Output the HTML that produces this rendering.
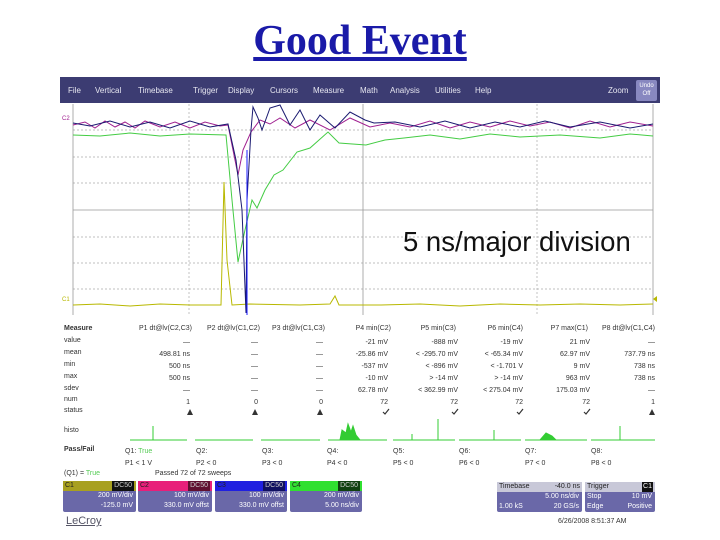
<!DOCTYPE html>
<html><head><style>
body{margin:0;width:720px;height:540px;background:#fff;position:relative;overflow:hidden;font-family:"Liberation Sans",sans-serif}
.t{position:absolute;font-size:7px;color:#333;white-space:nowrap;line-height:8px}
.r{text-align:right}
.title{position:absolute;left:0;width:720px;top:17px;text-align:center;font-family:"Liberation Serif",serif;font-weight:bold;font-size:42px;color:#1a1aa8;text-decoration:underline}
.menu{position:absolute;left:60px;top:77px;width:600px;height:26px;background:#3c3c72}
.menu span{position:absolute;top:9px;font-size:8px;color:#e6e6f0}
.box{position:absolute;background:#6a68a8;color:#fff;font-size:7px;border-radius:2px}
.box .h{height:10px;line-height:10px;padding:0 2px;color:#222}
.box .v{text-align:right;padding-right:3px;line-height:10px}
</style></head><body>
<div class="title">Good Event</div>
<div class="menu">
<span style="left:8px">File</span><span style="left:35px">Vertical</span><span style="left:78px">Timebase</span><span style="left:133px">Trigger</span><span style="left:168px">Display</span><span style="left:210px">Cursors</span><span style="left:253px">Measure</span><span style="left:300px">Math</span><span style="left:330px">Analysis</span><span style="left:375px">Utilities</span><span style="left:415px">Help</span><span style="left:548px">Zoom</span>
<div style="position:absolute;left:576px;top:3px;width:21px;height:21px;background:#8888c0;border-radius:2px;font-size:6px;color:#fff;text-align:center;line-height:8px;padding-top:2px;box-sizing:border-box">Undo<br>Off</div>
</div>
<svg style="position:absolute;left:0;top:0" width="720" height="540">
<g stroke="#aaa" stroke-width="0.7" stroke-dasharray="2,2">
<line x1="73" y1="130" x2="653" y2="130"/><line x1="73" y1="157" x2="653" y2="157"/><line x1="73" y1="183" x2="653" y2="183"/><line x1="73" y1="237" x2="653" y2="237"/><line x1="73" y1="263" x2="653" y2="263"/><line x1="73" y1="289" x2="653" y2="289"/>
<line x1="189" y1="104" x2="189" y2="315"/><line x1="537" y1="104" x2="537" y2="315"/>
</g>
<g stroke="#999" stroke-width="0.8"><line x1="73" y1="104" x2="73" y2="315"/><line x1="653" y1="104" x2="653" y2="315"/><line x1="363" y1="104" x2="363" y2="315"/><line x1="73" y1="210" x2="653" y2="210"/></g>
<polyline fill="none" stroke="#b8b800" stroke-width="1" points="73,305 100,304 130,306 160,304 190,305 221,305 224,182 227,260 232,305 250,304 300,305 330,304 335,296 339,305 380,305 420,304 460,306 500,304 540,305 580,304 620,305 653,304"/>
<polyline fill="none" stroke="#44cc44" stroke-width="1" points="73,135 100,136 130,133 160,136 190,134 226,135 232,200 238,262 245,230 252,200 257,208 265,190 274,175 283,170 297,152 310,148 328,132 339,143 366,145 385,140 404,138 430,135 460,139 490,134 520,137 560,135 600,138 630,134 653,136"/>
<polyline fill="none" stroke="#a02090" stroke-width="1" points="73,125 85,122 95,128 105,121 115,127 125,122 135,128 145,121 160,127 175,122 190,128 205,122 220,126 228,125 233,150 238,175 243,150 251,132 260,120 270,124 280,118 295,128 310,120 330,130 350,118 370,127 390,123 410,127 430,121 450,128 470,122 490,127 510,121 530,126 550,122 570,128 590,121 610,127 630,122 653,126"/>
<polyline fill="none" stroke="#1a1a70" stroke-width="1" points="73,123 90,126 110,121 130,127 150,122 170,128 190,121 210,127 228,124 236,160 242,210 246,313 247,200 251,130 253,107 258,118 262,130 270,108 280,105 290,125 300,110 310,130 320,115 335,128 350,112 365,120 374,123 395,122 420,127 445,121 470,128 495,122 520,127 545,121 570,127 600,122 630,128 653,124"/>
<line x1="247" y1="150" x2="247" y2="315" stroke="#1a1aff" stroke-width="1"/>
<polygon points="657,296 653,299 657,302" fill="#b8b800"/>
<g fill="#333"><polygon points="187,415 190,409 193,415"/><polygon points="252,415 255,409 258,415"/><polygon points="317,415 320,409 323,415"/><polygon points="649,415 652,409 655,415"/></g>
<g stroke="#333" stroke-width="1.2" fill="none"><polyline points="383,412 385,414 389,409"/><polyline points="452,412 454,414 458,409"/><polyline points="517,412 519,414 523,409"/><polyline points="584,412 586,414 590,409"/></g>
<g stroke="#33cc33" stroke-width="1" fill="#33cc33">
<line x1="130" y1="440" x2="187" y2="440"/><line x1="153" y1="440" x2="153" y2="426"/>
<line x1="195" y1="440" x2="253" y2="440"/><line x1="261" y1="440" x2="320" y2="440"/>
<polygon points="340,440 342,430 346,433 348,424 351,432 353,426 356,435 360,440"/><line x1="328" y1="440" x2="387" y2="440"/>
<line x1="393" y1="440" x2="455" y2="440"/><line x1="438" y1="440" x2="438" y2="419"/><line x1="412" y1="440" x2="412" y2="434"/>
<line x1="459" y1="440" x2="521" y2="440"/><line x1="494" y1="440" x2="494" y2="430"/>
<line x1="525" y1="440" x2="587" y2="440"/><polygon points="540,440 546,433 552,436 556,440"/>
<line x1="591" y1="440" x2="655" y2="440"/><line x1="620" y1="440" x2="620" y2="426"/>
</g>
</svg>
<div class="t" style="left:62px;top:115px;color:#a02090;font-size:6px">C2</div>
<div class="t" style="left:62px;top:296px;color:#b8b800;font-size:6px">C1</div>
<div class="t" style="left:403px;top:227px;font-size:27.5px;line-height:29px;color:#111">5 ns/major division</div>
<div class="t" style="left:64px;top:325px;font-weight:bold">Measure</div>
<div class="t" style="left:64px;top:337px">value</div><div class="t" style="left:64px;top:349px">mean</div><div class="t" style="left:64px;top:361px">min</div><div class="t" style="left:64px;top:373px">max</div><div class="t" style="left:64px;top:385px">sdev</div><div class="t" style="left:64px;top:396px">num</div><div class="t" style="left:64px;top:407px">status</div><div class="t" style="left:64px;top:427px">histo</div>
<div class="t" style="left:64px;top:446px;font-weight:bold">Pass/Fail</div>
<div class="t" style="left:64px;top:470px">(Q1) = <span style="color:#5c5">True</span></div>
<div class="t" style="left:155px;top:470px">Passed 72 of 72 sweeps</div>
<div class="t r" style="left:100px;width:92px;top:325px">P1 dt@lv(C2,C3)</div>
<div class="t r" style="left:170px;width:90px;top:325px">P2 dt@lv(C1,C2)</div>
<div class="t r" style="left:230px;width:95px;top:325px">P3 dt@lv(C1,C3)</div>
<div class="t r" style="left:330px;width:61px;top:325px">P4 min(C2)</div>
<div class="t r" style="left:395px;width:61px;top:325px">P5 min(C3)</div>
<div class="t r" style="left:460px;width:63px;top:325px">P6 min(C4)</div>
<div class="t r" style="left:525px;width:63px;top:325px">P7 max(C1)</div>
<div class="t r" style="left:590px;width:65px;top:325px">P8 dt@lv(C1,C4)</div>
<div class="t r" style="left:120px;width:70px;top:337px;line-height:12px">—<br>498.81 ns<br>500 ns<br>500 ns<br>—<br>1</div>
<div class="t r" style="left:200px;width:58px;top:337px;line-height:12px">—<br>—<br>—<br>—<br>—<br>0</div>
<div class="t r" style="left:265px;width:58px;top:337px;line-height:12px">—<br>—<br>—<br>—<br>—<br>0</div>
<div class="t r" style="left:330px;width:58px;top:337px;line-height:12px">-21 mV<br>-25.86 mV<br>-537 mV<br>-10 mV<br>62.78 mV<br>72</div>
<div class="t r" style="left:395px;width:63px;top:337px;line-height:12px">-888 mV<br>&lt; -295.70 mV<br>&lt; -896 mV<br>&gt; -14 mV<br>&lt; 362.99 mV<br>72</div>
<div class="t r" style="left:460px;width:63px;top:337px;line-height:12px">-19 mV<br>&lt; -65.34 mV<br>&lt; -1.701 V<br>&gt; -14 mV<br>&lt; 275.04 mV<br>72</div>
<div class="t r" style="left:525px;width:65px;top:337px;line-height:12px">21 mV<br>62.97 mV<br>9 mV<br>963 mV<br>175.03 mV<br>72</div>
<div class="t r" style="left:590px;width:65px;top:337px;line-height:12px">—<br>737.79 ns<br>738 ns<br>738 ns<br>—<br>1</div>
<div class="t" style="left:125px;top:446px;line-height:12px">Q1: <span style="color:#5c5">True</span><br>P1 &lt; 1 V</div>
<div class="t" style="left:196px;top:446px;line-height:12px">Q2:<br>P2 &lt; 0</div>
<div class="t" style="left:262px;top:446px;line-height:12px">Q3:<br>P3 &lt; 0</div>
<div class="t" style="left:327px;top:446px;line-height:12px">Q4:<br>P4 &lt; 0</div>
<div class="t" style="left:393px;top:446px;line-height:12px">Q5:<br>P5 &lt; 0</div>
<div class="t" style="left:459px;top:446px;line-height:12px">Q6:<br>P6 &lt; 0</div>
<div class="t" style="left:525px;top:446px;line-height:12px">Q7:<br>P7 &lt; 0</div>
<div class="t" style="left:591px;top:446px;line-height:12px">Q8:<br>P8 &lt; 0</div>
<div class="box" style="left:63px;top:481px;width:73px;height:31px"><div class="h" style="background:#a8a020">C1<span style="float:right;background:#111;color:#ccc;padding:0 2px">DC50</span></div><div class="v">200 mV/div</div><div class="v">-125.0 mV</div></div>
<div class="box" style="left:138px;top:481px;width:74px;height:31px"><div class="h" style="background:#e8207a">C2<span style="float:right;background:#601030;color:#ccc;padding:0 2px">DC50</span></div><div class="v">100 mV/div</div><div class="v">330.0 mV offst</div></div>
<div class="box" style="left:215px;top:481px;width:72px;height:31px"><div class="h" style="background:#2020e0">C3<span style="float:right;background:#101060;color:#ccc;padding:0 2px">DC50</span></div><div class="v">100 mV/div</div><div class="v">330.0 mV offst</div></div>
<div class="box" style="left:290px;top:481px;width:72px;height:31px"><div class="h" style="background:#30e030">C4<span style="float:right;background:#104010;color:#ccc;padding:0 2px">DC50</span></div><div class="v">200 mV/div</div><div class="v">5.00 ns/div</div></div>
<div class="box" style="left:497px;top:482px;width:85px;height:30px"><div class="h" style="background:#c8c8d8">Timebase<span style="float:right">-40.0 ns</span></div><div class="v">5.00 ns/div</div><div class="v"><span style="float:left;padding-left:2px">1.00 kS</span>20 GS/s</div></div>
<div class="box" style="left:585px;top:482px;width:70px;height:30px"><div class="h" style="background:#c8c8d8">Trigger<span style="float:right;background:#111;color:#fff;padding:0 1px">C1</span></div><div class="v"><span style="float:left;padding-left:2px">Stop</span>10 mV</div><div class="v"><span style="float:left;padding-left:2px">Edge</span>Positive</div></div>
<div class="t" style="left:66px;top:515px;font-size:11px;line-height:12px;color:#556;text-decoration:underline">LeCroy</div>
<div class="t" style="left:558px;top:518px;font-size:7px">6/26/2008 8:51:37 AM</div>
</body></html>
